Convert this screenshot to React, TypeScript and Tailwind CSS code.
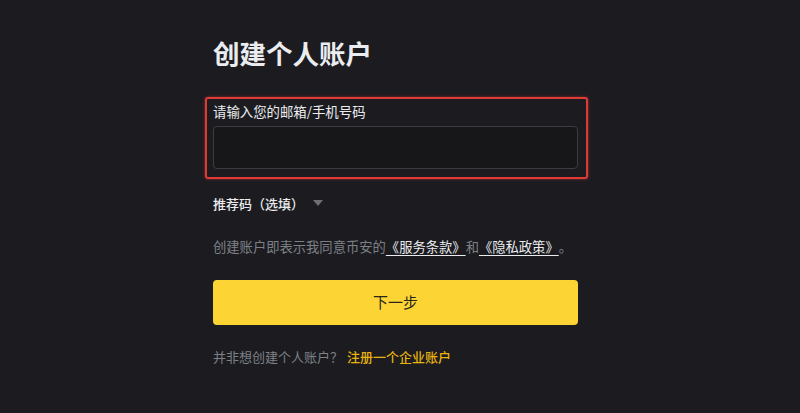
import React from "react"

const font = { fontFamily: '"Noto Sans CJK SC", "Noto Sans", sans-serif' }

export default function App() {
  return (
    <div
      className="min-h-[413px] w-full bg-[#1c1c20] text-[#eaecef] [text-spacing-trim:space-all]"
      style={font}
    >
      <div className="ml-[213px] w-[365px] pt-[35px]">
        {/* Title */}
        <h1 className="text-[26.5px] font-bold leading-[36px] text-[#eaecef]">
          创建个人账户
        </h1>

        {/* Email / phone field, highlighted */}
        <div className="mt-[26px] ml-[-8px] mr-[-10px] rounded-[3px] border-2 border-[#e03a36] pl-[6px] pr-[8px] pt-[3px] pb-[8px] shadow-[0_0_3px_rgba(224,58,54,0.6)]">
          <label className="block text-[13.4px] leading-[18px] text-[#eaecef]">
            请输入您的邮箱/手机号码
          </label>
          <input
            type="text"
            className="mt-[6px] block h-[43px] w-full rounded-[4px] border border-[#3b3b41] bg-[#17171a] px-3 text-[14px] text-[#eaecef] outline-none"
          />
        </div>

        {/* Referral */}
        <button
          type="button"
          className="mt-[16px] flex items-center gap-[9px] text-[13px] font-medium leading-[18px] text-[#eaecef]"
        >
          <span>推荐码（选填）</span>
          <svg width="10" height="7" viewBox="0 0 10 7" className="mt-[-2px]">
            <path d="M0 0h10L5 6z" fill="#6c6f76" />
          </svg>
        </button>

        {/* Terms */}
        <p className="mt-[25px] text-[13.3px] leading-[18px] text-[#7d8087]">
          创建账户即表示我同意币安的
          <a className="text-[#eaecef] underline underline-offset-[3px]">《服务条款》</a>
          和
          <a className="text-[#eaecef] underline underline-offset-[3px]">《隐私政策》</a>
          。
        </p>

        {/* Next */}
        <button
          type="button"
          className="mt-[24px] flex h-[45px] w-full items-center justify-center rounded-[4px] bg-[#fcd535] text-[15px] text-[#2a2418]"
        >
          下一步
        </button>

        {/* Business account */}
        <p className="mt-[23px] text-[13px] leading-[18px] text-[#7d8087]">
          并非想创建个人账户？
          <a className="ml-[4px] font-medium text-[#e8b30e]">注册一个企业账户</a>
        </p>
      </div>
    </div>
  )
}
